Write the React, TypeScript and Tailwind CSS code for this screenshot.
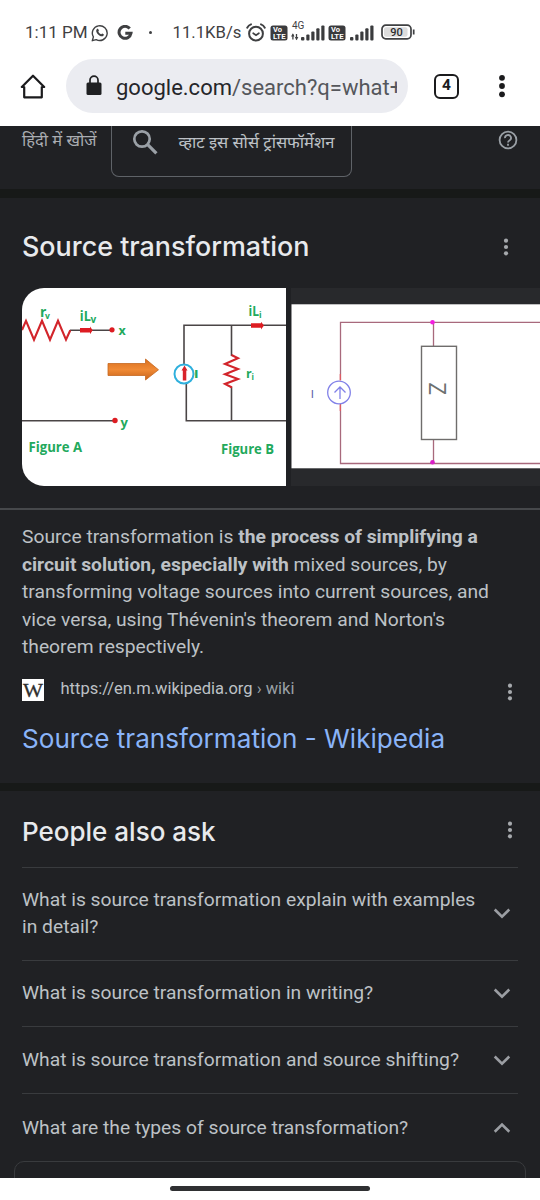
import type { ReactNode } from "react";

function VoLte() {
  return (
    <svg width="18" height="16" viewBox="0 0 18 16" className="shrink-0">
      <rect x="0.5" y="0.5" width="17" height="15" rx="2.5" fill="#3a3b3d" />
      <text x="3" y="7.2" fontSize="7" fontWeight="700" fill="#fff" fontFamily="Roboto, sans-serif" textLength="9" lengthAdjust="spacingAndGlyphs">Vo</text>
      <text x="3" y="13.8" fontSize="7" fontWeight="700" fill="#fff" fontFamily="Roboto, sans-serif" textLength="12.5" lengthAdjust="spacingAndGlyphs">LTE</text>
    </svg>
  );
}

function Signal() {
  return (
    <svg width="24" height="16" viewBox="0 0 24 16" fill="#3a3b3d" className="shrink-0">
      <rect x="0" y="12" width="3.4" height="3.6" rx="1" />
      <rect x="5.3" y="9.5" width="3.2" height="6.1" rx="1" />
      <rect x="10.3" y="6.5" width="3.2" height="9.1" rx="1" />
      <rect x="15.3" y="3.3" width="3.2" height="12.3" rx="1" />
      <rect x="20.3" y="0.4" width="3.2" height="15.2" rx="1" />
    </svg>
  );
}

function StatusBar() {
  return (
    <div className="flex h-[59px] items-center pt-[6px] pl-[25px] text-[17px] text-[#3f4042]">
      <span className="w-[66px] shrink-0 whitespace-nowrap">1:11 PM</span>
      <svg width="18" height="18" viewBox="0 0 18 18" fill="none" stroke="#3f4042" className="shrink-0">
        <path d="M1.3 16.7 2.4 12.9A7.4 7.4 0 1 1 5.2 15.6Z" strokeWidth="1.4" strokeLinejoin="round" />
        <path d="M5.8 5.2c.5-.6 1.2-.5 1.5 0l.6 1.4c.1.4-.6 1-.6 1.2.6 1.2 1.5 2 2.7 2.5.4.1.8-.9 1.2-.8l1.500.8c.3.3 0 1.3-.5 1.7-.9.7-2.400.3-3.900-.6C6.700 10.400 5.400 8.600 5.200 7.200c-.1-.9.2-1.500.6-2Z" fill="#3f4042" stroke="none" />
      </svg>
      <svg width="16" height="16" viewBox="0 0 16 16" fill="none" stroke="#3f4042" strokeWidth="3" className="ml-[8px] shrink-0">
        <path d="M12.7 3.5A6 6 0 1 0 14 8.3H8.3" />
      </svg>
      <span className="ml-[15.5px] h-[3px] w-[3px] shrink-0 rounded-full bg-[#3f4042]" />
      <span className="ml-[21px] w-[73px] shrink-0 text-[16.7px] whitespace-nowrap">11.1KB/s</span>
      <svg width="20" height="19" viewBox="0 0 20 19" fill="none" stroke="#3f4042" strokeLinecap="round" className="-mt-[1px] shrink-0">
        <circle cx="10" cy="10.7" r="6.9" strokeWidth="2" />
        <path d="M1.2 4.7Q2.5 2.2 5 1.3M18.8 4.7Q17.5 2.2 15 1.3" strokeWidth="1.9" />
        <path d="m7.2 10.2 2.8 2 2.9-2" strokeWidth="1.7" />
      </svg>
      <span className="ml-[4px] flex"><VoLte /></span>
      <svg width="16" height="22" viewBox="0 0 16 22" className="-mt-[4px] -mr-[2px] ml-[3.5px] shrink-0">
        <text x="1" y="9.2" fontSize="10" fill="#3f4042" fontFamily="Roboto, sans-serif">4G</text>
        <path d="M1.900 19.500V14.500M5.500 14v5.500" stroke="#3f4042" strokeWidth="1.300" />
        <path d="M0 16.500 1.900 13.300 3.500 16.500ZM3.900 17 5.500 20.200 7.400 17Z" fill="#3f4042" />
      </svg>
      <span className="-ml-[4px] flex"><Signal /></span>
      <span className="ml-[3px] flex"><VoLte /></span>
      <span className="ml-[4px] flex"><Signal /></span>
      <svg width="34" height="16" viewBox="0 0 34 16" className="-mt-[1px] ml-[6.500px] shrink-0">
        <rect x="1" y="1.200" width="29" height="13.600" rx="3.800" fill="#fff" stroke="#3f4042" strokeWidth="1.700" />
        <rect x="3" y="3.200" width="23.500" height="9.600" rx="2" fill="#dcdcdc" />
        <path d="M32.700 5.500v5" stroke="#3f4042" strokeWidth="1.700" />
        <text x="15.500" y="12" fontSize="11" fontWeight="500" textAnchor="middle" fill="#2c2d2f" fontFamily="Roboto, sans-serif">90</text>
      </svg>
    </div>
  );
}

function Toolbar() {
  return (
    <div className="flex h-[67px] items-start">
      <svg width="26" height="26" viewBox="0 0 26 26" fill="none" stroke="#1b1b1d" strokeWidth="2.200" strokeLinejoin="round" className="mt-[15px] ml-[20px] shrink-0">
        <path d="M1.800 13 13 1.700 24.200 13H21.800V23.300H4.200V13Z" />
      </svg>
      <div className="ml-[20px] flex h-[54px] w-[342px] items-center rounded-full bg-[#ebecf1] pl-[19.500px]">
        <svg width="16" height="21" viewBox="0 0 16 21" className="mb-[2px] shrink-0">
          <rect x="0.500" y="7.500" width="15" height="12.500" rx="1.500" fill="#1f2022" />
          <path d="M4 8V5a4 3.900 0 0 1 8 0v3" fill="none" stroke="#1f2022" strokeWidth="1.700" />
        </svg>
        <div className="mt-[3px] ml-[14.500px] w-[281px] overflow-hidden text-[22px] leading-[30px] whitespace-nowrap text-[#55575c]">
          <span className="text-[#25262a]">google.com</span>/search?q=what+
        </div>
      </div>
      <div className="mt-[14.500px] ml-[26px] flex h-[25px] w-[25px] items-center justify-center rounded-[6px] border-[2.500px] border-[#1b1b1d] text-[15.500px] font-bold text-[#1b1b1d]">4</div>
      <svg width="8" height="26" viewBox="0 0 8 26" fill="#1b1b1d" className="mt-[14px] ml-[38.500px] shrink-0">
        <circle cx="4" cy="4.800" r="2.900" /><circle cx="4" cy="13" r="2.900" /><circle cx="4" cy="21.300" r="2.900" />
      </svg>
    </div>
  );
}

function Dots() {
  return (
    <svg width="8" height="20" viewBox="0 0 8 20" fill="#a6a9ad" className="shrink-0">
      <circle cx="4" cy="3.700" r="2.100" /><circle cx="4" cy="10" r="2.100" /><circle cx="4" cy="16.300" r="2.100" />
    </svg>
  );
}

function HindiRow() {
  return (
    <div className="flex h-[63px] items-start font-['Noto_Sans',sans-serif] text-[16.500px] leading-[28px] text-[#bdc1c6]">
      <span className="box-content w-[89px] pl-[22px] whitespace-nowrap text-[#a9acb1]">हिंदी में खोजें</span>
      <div className="flex h-[51px] w-[241px] items-start rounded-b-[8px] border border-t-0 border-[#5f6368] pl-[20px]">
        <svg width="27" height="27" viewBox="0 0 27 27" fill="none" stroke="#9aa0a6" className="mt-[3px] shrink-0">
          <circle cx="10" cy="10" r="7.700" strokeWidth="2.700" />
          <path d="m15.700 15.700 8.700 8.700" strokeWidth="3.200" />
        </svg>
        <span className="ml-[19.500px] pt-[2px] whitespace-nowrap">व्हाट इस सोर्स ट्रांसफॉर्मेशन</span>
      </div>
      <svg width="20" height="20" viewBox="0 0 20 20" fill="none" stroke="#9aa0a6" strokeWidth="1.800" className="mt-[4px] ml-[145.500px] shrink-0">
        <circle cx="10" cy="10" r="8.400" />
        <path d="M7 8.200a3 2.900 0 1 1 4.700 2.100C10.600 11 10 11.400 10 12.500" />
        <path d="M10 13.800v2" />
      </svg>
    </div>
  );
}

function FigureAB() {
  return (
    <svg width="264" height="198" viewBox="22 288 264 198" className="shrink-0 rounded-l-[22px] bg-white">
      <defs>
        <linearGradient id="arrow" x1="0" y1="0" x2="0" y2="1">
          <stop offset="0" stopColor="#d9701f" /><stop offset="0.500" stopColor="#f08a35" /><stop offset="1" stopColor="#c9641a" />
        </linearGradient>
      </defs>
      <g fill="none" stroke="#4a4546" strokeWidth="1.600">
        <path d="M70 330.300H112M22 420.700H115" />
        <path d="M184 364V325.300H286M186.300 384V420.700H286M231.500 325V356M231.500 387V420" />
      </g>
      <g fill="none" stroke="#d2252b" strokeWidth="2.100">
        <path d="M22 330 26 320.800 34 339.700 42 320.800 50 339.700 58 320.800 66 339.700 70.300 330.300" />
        <path d="M231.500 355 238 358.300 225 364 238 369 225 374.300 238 379 225 384 232 387.500" />
      </g>
      <g fill="#dd1c22">
        <path d="M80 328h10v-1.600l2.700 3.900-2.700 4v-1.700H80zM251 323.300h10v-1.600l3 3.800-3 3.900v-1.700h-10z" />
        <circle cx="112" cy="329.800" r="2.600" /><circle cx="115" cy="420.500" r="2.700" />
      </g>
      <path d="M108 363.500H145.500V359L158.500 369.800 145.500 380V375.500H108Z" fill="url(#arrow)" stroke="#c5671f" strokeWidth="0.800" />
      <circle cx="184" cy="374" r="9.500" fill="#fff" stroke="#2fb0dd" strokeWidth="2" />
      <path d="M182.800 380.500V370.500H181.500L184.500 365.500 187.500 370.500H186.300V380.500Z" fill="#d8232a" />
      <g fill="#22a95c" fontFamily="'Open Sans', sans-serif" fontWeight="700">
        <text x="40" y="316.500" fontSize="14">r</text><text x="45" y="318.500" fontSize="8.500">v</text>
        <text x="79.800" y="320.500" fontSize="13.500" textLength="11" lengthAdjust="spacingAndGlyphs">iL</text><text x="90.500" y="322.500" fontSize="10">v</text>
        <text x="118.500" y="335" fontSize="12.500">x</text>
        <text x="120.500" y="426.500" fontSize="13">y</text>
        <text x="248.500" y="315.500" fontSize="13.500" textLength="10.500" lengthAdjust="spacingAndGlyphs">iL</text><text x="259" y="317.500" fontSize="8.500">i</text>
        <text x="194" y="377.500" fontSize="11.500" textLength="4.500" lengthAdjust="spacingAndGlyphs" fontFamily="'Liberation Sans', sans-serif">I</text>
        <text x="246" y="378" fontSize="12.500">r</text><text x="251.500" y="380" fontSize="8">i</text>
        <text x="28.500" y="451.500" fontSize="13.500" textLength="53.500" lengthAdjust="spacingAndGlyphs">Figure A</text>
        <text x="221" y="454" fontSize="13.500" textLength="53" lengthAdjust="spacingAndGlyphs">Figure B</text>
      </g>
    </svg>
  );
}

function NortonCircuit() {
  return (
    <svg width="249" height="198" viewBox="291 288 249 198" className="shrink-0 bg-[#28292c]">
      <rect x="291.500" y="304.300" width="249" height="164" fill="#fff" />
      <g fill="none" stroke="#a8697c" strokeWidth="1.300">
        <path d="M540 322.300H340.500V380M340.500 404V463.500H540M433.500 322V346M433.500 440V463" />
      </g>
      <rect x="421.500" y="346.300" width="35" height="93.200" fill="#fff" stroke="#6f6d6c" strokeWidth="1.400" />
      <g fill="none" stroke="#8181e8" strokeWidth="1.300">
        <circle cx="339" cy="392.500" r="11.300" />
        <path d="M340 399V387M334.500 392.500 340 387 345.500 392.500" />
      </g>
      <path d="M340.300 374v6.500M340.300 404.500v6.500" stroke="#e35b62" strokeWidth="1.200" />
      <circle cx="432.500" cy="322.300" r="2.300" fill="#f41de0" /><circle cx="432.500" cy="462.300" r="2.300" fill="#d91fc8" />
      <text x="310.800" y="398" fontSize="11.500" fill="#5c5ca8" fontFamily="'Liberation Sans', sans-serif">I</text>
      <text transform="translate(428.500 382.500) rotate(90)" x="0" y="0" fontSize="23" fill="#6d7170" fontFamily="'Open Sans', sans-serif" textLength="12.500" lengthAdjust="spacingAndGlyphs">Z</text>
    </svg>
  );
}

function Question({ children, open, className }: { children: ReactNode; open?: boolean; className: string }) {
  return (
    <div className={`mx-[22px] flex items-center justify-between border-t border-[#393b3e] ${className}`}>
      <span className="w-[458px] shrink-0 text-[19.250px] leading-[27.500px] text-[#bdc1c6]">{children}</span>
      <svg width="18" height="12" viewBox="0 0 18 12" fill="none" stroke="#9b9ea3" strokeWidth="2.600" className="mr-[7px] shrink-0">
        {open ? <path d="M1.700 9.700 9 2.500l7.300 7.200" /> : <path d="M1.700 2.500 9 9.700l7.300-7.200" />}
      </svg>
    </div>
  );
}

export default function App() {
  return (
    <main className="flex h-[1200px] w-[540px] flex-col overflow-hidden bg-[#202124] font-[Roboto,sans-serif]">
      <header className="h-[126px] shrink-0 bg-white">
        <StatusBar />
        <Toolbar />
      </header>
      <HindiRow />
      <div className="h-[9px] shrink-0 bg-[#171918]" />

      <section className="h-[585px] shrink-0">
        <div className="flex h-[90px] items-start justify-between pt-[30px] pr-[30px] pl-[22px]">
          <h2 className="font-[Inter,sans-serif] text-[26.900px] leading-[36px] font-medium whitespace-nowrap text-[#e8eaed]">Source transformation</h2>
          <div className="pt-[9px]"><Dots /></div>
        </div>
        <div className="flex h-[198px] gap-[5px] pl-[22px]">
          <FigureAB />
          <NortonCircuit />
        </div>
        <div className="mt-[22px] border-t-2 border-[#46484b] px-[22px] pt-[13px]">
          <p className="text-[19.250px] leading-[27.500px] whitespace-nowrap text-[#bdc1c6]">
            Source transformation is <b>the process of simplifying a</b><br />
            <b>circuit solution, especially with</b> mixed sources, by<br />
            transforming voltage sources into current sources, and<br />
            vice versa, using Thévenin's theorem and Norton's<br />
            theorem respectively.
          </p>
          <div className="mt-[18px] flex h-[22px] items-center text-[16.500px] text-[#bdc1c6]">
            <svg width="22" height="22" viewBox="0 0 22 22" className="shrink-0 bg-white">
              <text x="1" y="17.500" fontSize="19" fill="#2f2f2f" stroke="#2f2f2f" strokeWidth="0.300" fontFamily="'Liberation Serif', serif" textLength="20" lengthAdjust="spacingAndGlyphs">W</text>
            </svg>
            <span className="ml-[16.500px]">https://en.m.wikipedia.org <span className="text-[#9aa0a6]">› wiki</span></span>
            <span className="mt-[5px] mr-[4px] ml-auto flex"><Dots /></span>
          </div>
          <h3 className="mt-[20px] font-[Inter,sans-serif] text-[26.130px] leading-[36px] whitespace-nowrap text-[#8ab4f8]">Source transformation - Wikipedia</h3>
        </div>
      </section>
      <div className="h-[8px] shrink-0 bg-[#171918]" />

      <section className="h-[387px] shrink-0 overflow-hidden">
        <div className="flex h-[76px] items-start justify-between pt-[23px] pr-[26px] pl-[22px]">
          <h2 className="font-[Inter,sans-serif] text-[26px] leading-[36px] font-medium text-[#e8eaed]">People also ask</h2>
          <div className="pt-[6px]"><Dots /></div>
        </div>
        <Question className="h-[93px] pb-[2px]">What is source transformation explain with examples<br />in detail?</Question>
        <Question className="h-[66px] pb-[2px]">What is source transformation in writing?</Question>
        <Question className="h-[67px]">What is source transformation and source shifting?</Question>
        <Question className="h-[68px]" open>What are the types of source transformation?</Question>
        <div className="mx-[14px] h-[40px] rounded-t-[10px] border border-[#393b3e]" />
      </section>
      <footer className="flex h-[22px] shrink-0 justify-center bg-white pt-[8px]">
        <div className="h-[5px] w-[200px] rounded-full bg-[#2f3032]" />
      </footer>
    </main>
  );
}
